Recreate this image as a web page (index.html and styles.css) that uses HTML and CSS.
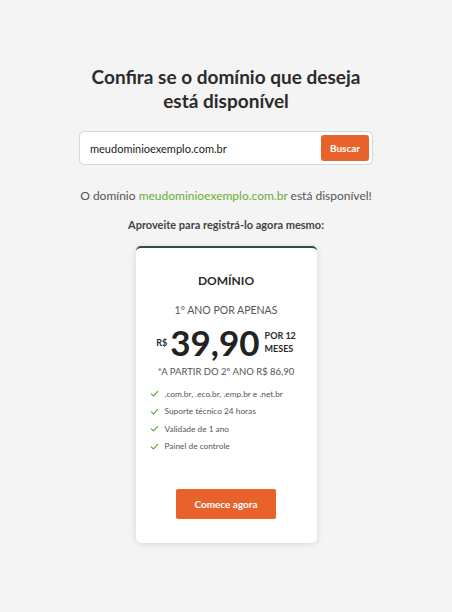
FILE: index.html
```html
<!DOCTYPE html>
<html lang="pt-BR">
<head>
<meta charset="utf-8">
<link rel="stylesheet" href="styles.css">
</head>
<body>
<main class="page">
  <h1 class="title">Confira se o domínio que deseja<br>está disponível</h1>
  <div class="search">
    <span class="search-text">meudominioexemplo.com.br</span>
    <button class="search-btn">Buscar</button>
  </div>
  <p class="result">O domínio <span class="green">meudominioexemplo.com.br</span> está disponível!</p>
  <p class="cta">Aproveite para registrá-lo agora mesmo:</p>
  <section class="card">
    <h2 class="card-title">DOMÍNIO</h2>
    <p class="first-year">1º ANO POR APENAS</p>
    <div class="price">
      <span class="currency">R$</span>
      <span class="amount">39,90</span>
      <span class="period">POR 12<br>MESES</span>
    </div>
    <p class="after">*A PARTIR DO 2º ANO R$ 86,90</p>
    <ul class="features">
      <li><svg class="check" viewBox="0 0 10 8"><path d="M1 4.2 L3.8 6.8 L9 1.2" fill="none" stroke="#5fa83a" stroke-width="1.3"/></svg>.com.br, .eco.br, .emp.br e .net.br</li>
      <li><svg class="check" viewBox="0 0 10 8"><path d="M1 4.2 L3.8 6.8 L9 1.2" fill="none" stroke="#5fa83a" stroke-width="1.3"/></svg>Suporte técnico 24 horas</li>
      <li><svg class="check" viewBox="0 0 10 8"><path d="M1 4.2 L3.8 6.8 L9 1.2" fill="none" stroke="#5fa83a" stroke-width="1.3"/></svg>Validade de 1 ano</li>
      <li><svg class="check" viewBox="0 0 10 8"><path d="M1 4.2 L3.8 6.8 L9 1.2" fill="none" stroke="#5fa83a" stroke-width="1.3"/></svg>Painel de controle</li>
    </ul>
    <button class="start-btn">Comece agora</button>
  </section>
</main>
</body>
</html>
```
FILE: styles.css
```css
html, body {
  margin: 0;
  padding: 0;
  background: #f4f4f4;
}
body {
  font-family: "Lato", "Noto Sans", sans-serif;
  color: #333;
  width: 452px;
  height: 612px;
}
.page {
  display: flex;
  flex-direction: column;
  align-items: center;
  padding-top: 65px;
}
.title {
  margin: 0;
  font-size: 19px;
  line-height: 24px;
  font-weight: 700;
  color: #2b2b2b;
  text-align: center;
}
.search {
  margin-top: 18px;
  width: 294px;
  height: 34px;
  box-sizing: border-box;
  background: #fff;
  border: 1px solid #d6d6d6;
  border-radius: 5px;
  display: flex;
  align-items: center;
  justify-content: space-between;
  padding: 0 3px 0 10px;
}
.search-text {
  font-size: 11px;
  color: #222;
}
.search-btn {
  width: 48px;
  height: 26px;
  border: none;
  border-radius: 3px;
  background: #e8632b;
  color: #fff;
  font-family: inherit;
  font-weight: 700;
  font-size: 10px;
  padding: 0;
}
.result {
  margin: 23px 0 0;
  font-size: 12px;
  line-height: 16px;
  color: #555;
}
.green { color: #6aad3a; }
.cta {
  margin: 14px 0 0;
  font-size: 11px;
  line-height: 14px;
  font-weight: 700;
  color: #444;
}
.card {
  margin-top: 14px;
  width: 181px;
  height: 297px;
  box-sizing: border-box;
  background: #fff;
  border-top: 2px solid #2b4c4c;
  border-radius: 5px;
  box-shadow: 0 1px 6px rgba(0,0,0,0.12);
  display: flex;
  flex-direction: column;
  align-items: center;
  padding-top: 25px;
}
.card-title {
  margin: 0;
  font-size: 12px;
  line-height: 16px;
  font-weight: 700;
  color: #2b2b2b;
}
.first-year {
  margin: 14px 0 0;
  font-size: 10.5px;
  line-height: 14px;
  color: #555;
}
.price {
  margin-top: 6px;
  display: flex;
  align-items: center;
  gap: 3px;
}
.currency {
  font-size: 9px;
  font-weight: 700;
  color: #2b2b2b;
}
.amount {
  font-size: 35px;
  line-height: 38px;
  font-weight: 700;
  color: #222;
}
.period {
  font-size: 9px;
  line-height: 13px;
  font-weight: 700;
  color: #2b2b2b;
  margin-left: 2px;
}
.after {
  margin: 4px 0 0;
  font-size: 9.5px;
  line-height: 13px;
  color: #555;
}
.features {
  list-style: none;
  margin: 7px 0 0;
  padding: 0 0 0 14px;
  align-self: stretch;
}
.features li {
  display: flex;
  align-items: center;
  height: 17.5px;
  font-size: 8.3px;
  color: #555;
}
.check {
  width: 9px;
  height: 7px;
  margin-right: 6px;
}
.start-btn {
  margin-top: 34px;
  width: 100px;
  height: 30px;
  border: none;
  border-radius: 2px;
  background: #e8632b;
  color: #fff;
  font-family: inherit;
  font-weight: 700;
  font-size: 10px;
  padding: 0;
}
```
